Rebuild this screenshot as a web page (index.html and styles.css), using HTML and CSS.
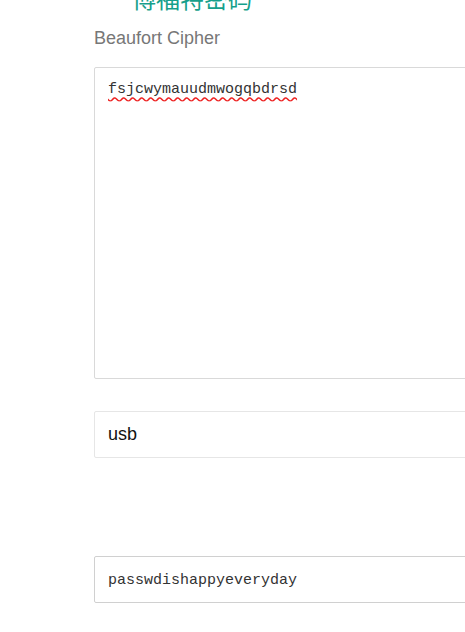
FILE: index.html
```html
<!DOCTYPE html>
<html lang="zh-CN">
<head>
  <meta charset="UTF-8">
  <meta name="viewport" content="width=device-width, initial-scale=1.0">
  <title>博福特密码</title>
  <link rel="stylesheet" href="styles.css">
</head>
<body>
  <div class="page">
    <h1 class="title">博福特密码</h1>
    <label class="label">Beaufort Cipher</label>
    <div class="field area"><span class="misspelt">fsjcwymauudmwogqbdrsd</span></div>
    <div class="field key">usb</div>
    <div class="field result">passwdishappyeveryday</div>
  </div>
</body>
</html>
```

FILE: styles.css
```css
html, body {
  margin: 0;
  background: #fff;
  overflow: hidden;
}
.page {
  padding-left: 94px;
  width: 380px;
  font-family: "Liberation Sans", Arial, sans-serif;
}
.title {
  margin: -17px 0 0 38px;
  height: 30px;
  font-family: "Noto Sans CJK SC", sans-serif;
  font-size: 24px;
  font-weight: normal;
  line-height: 30px;
  color: #169f8b;
}
.label {
  display: block;
  margin-top: 14px;
  font-size: 18px;
  line-height: 22px;
  color: #777;
}
.field {
  box-sizing: border-box;
  border: 1px solid #d9d9d9;
  border-radius: 2px;
  padding: 0 13px;
  background: #fff;
}
.area {
  margin-top: 18px;
  height: 312px;
  padding-top: 13px;
  font-family: "Liberation Mono", monospace;
  font-size: 15px;
  line-height: 18px;
  color: #333;
}
.misspelt {
  text-decoration: underline wavy #e22;
  text-underline-offset: 3px;
}
.key {
  margin-top: 32px;
  height: 47px;
  border-color: #e6e6e6;
  font-size: 18px;
  line-height: 45px;
  color: #111;
}
.result {
  margin-top: 98px;
  height: 47px;
  border-color: #d0d0d0;
  font-family: "Liberation Mono", monospace;
  font-size: 15px;
  line-height: 47px;
  color: #333;
}
```
